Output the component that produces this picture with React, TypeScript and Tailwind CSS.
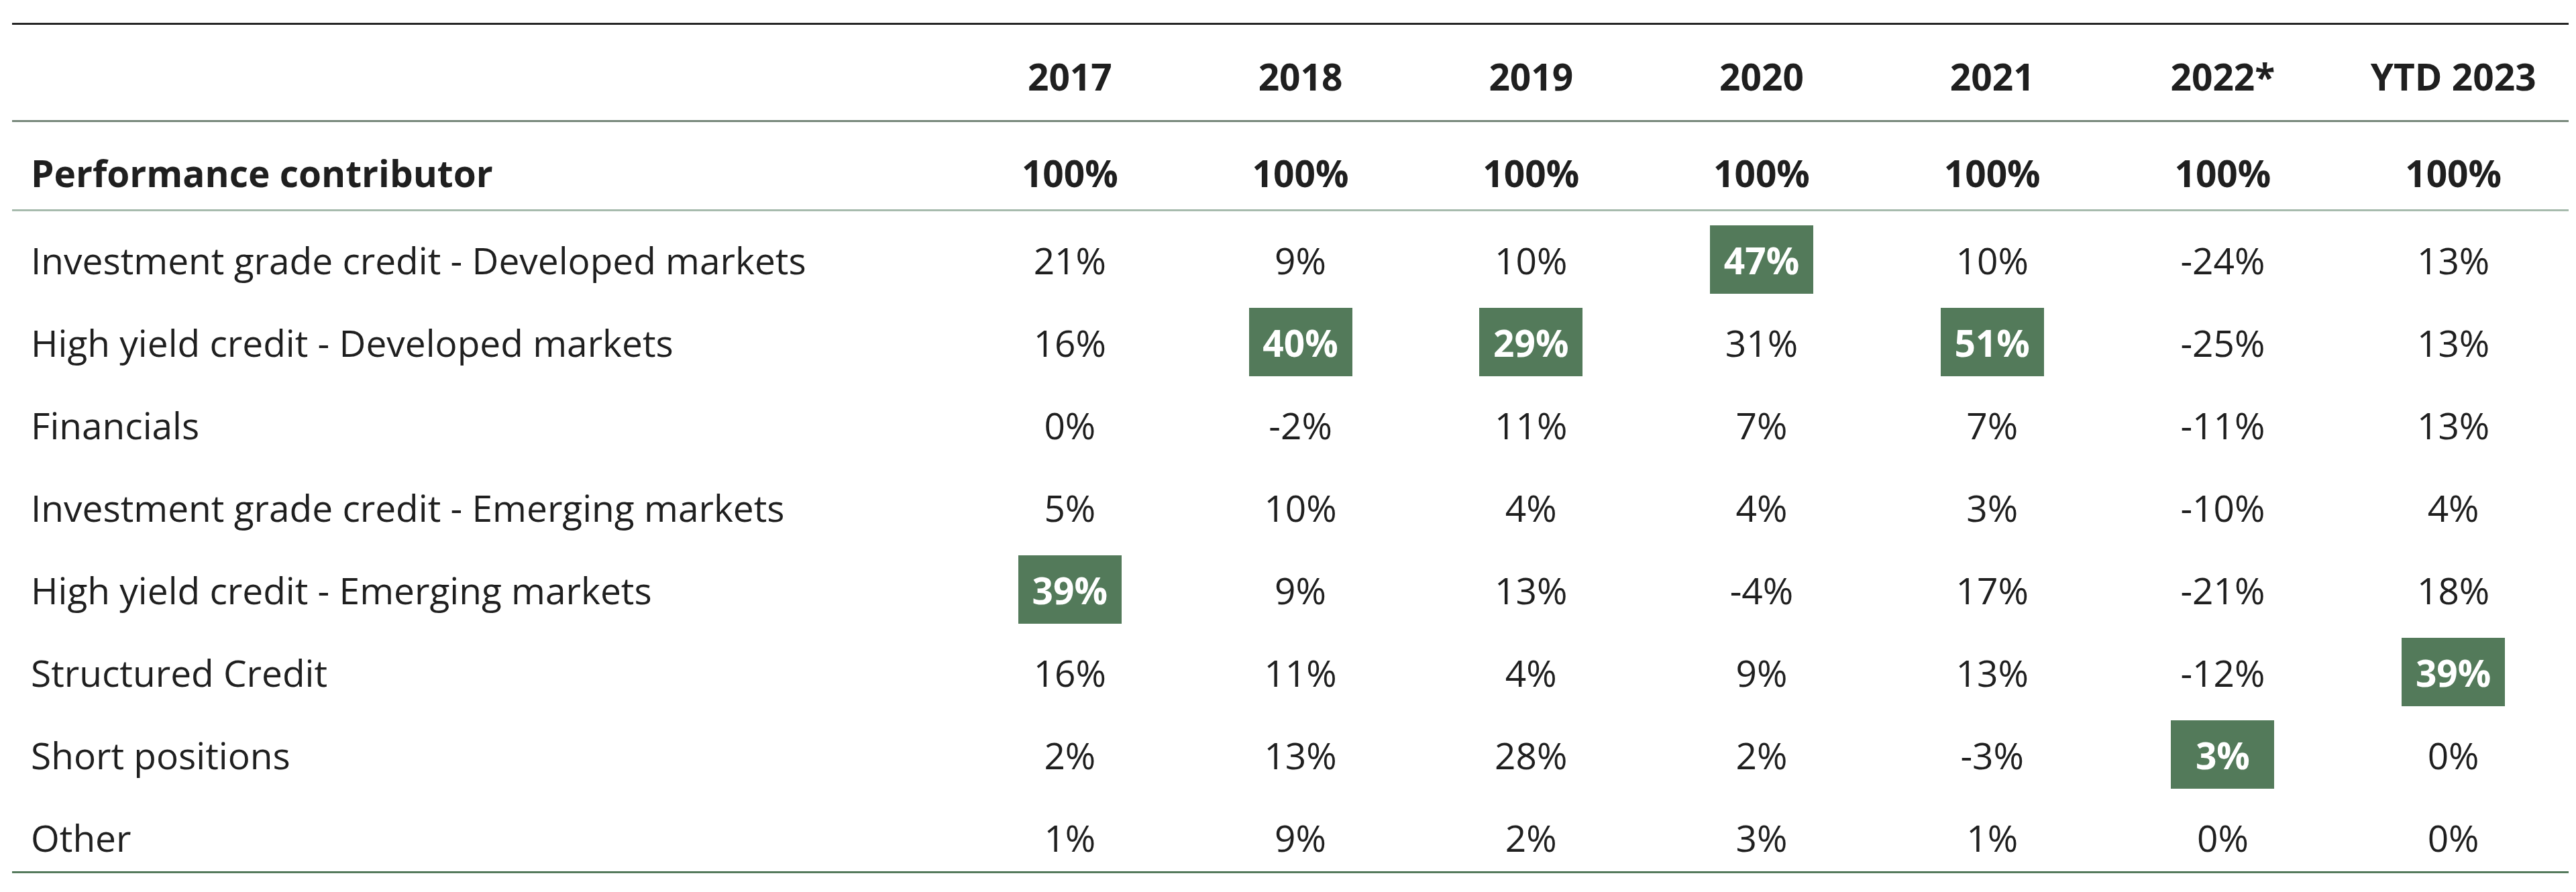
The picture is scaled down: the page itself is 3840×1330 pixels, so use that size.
import React from "react";

type Cell = { v: string; hi?: boolean };

const years = ["2017", "2018", "2019", "2020", "2021", "2022*", "YTD 2023"];

const rows: { label: string; cells: Cell[] }[] = [
  {
    label: "Investment grade credit - Developed markets",
    cells: [{ v: "21%" }, { v: "9%" }, { v: "10%" }, { v: "47%", hi: true }, { v: "10%" }, { v: "-24%" }, { v: "13%" }],
  },
  {
    label: "High yield credit - Developed markets",
    cells: [{ v: "16%" }, { v: "40%", hi: true }, { v: "29%", hi: true }, { v: "31%" }, { v: "51%", hi: true }, { v: "-25%" }, { v: "13%" }],
  },
  {
    label: "Financials",
    cells: [{ v: "0%" }, { v: "-2%" }, { v: "11%" }, { v: "7%" }, { v: "7%" }, { v: "-11%" }, { v: "13%" }],
  },
  {
    label: "Investment grade credit - Emerging markets",
    cells: [{ v: "5%" }, { v: "10%" }, { v: "4%" }, { v: "4%" }, { v: "3%" }, { v: "-10%" }, { v: "4%" }],
  },
  {
    label: "High yield credit - Emerging markets",
    cells: [{ v: "39%", hi: true }, { v: "9%" }, { v: "13%" }, { v: "-4%" }, { v: "17%" }, { v: "-21%" }, { v: "18%" }],
  },
  {
    label: "Structured Credit",
    cells: [{ v: "16%" }, { v: "11%" }, { v: "4%" }, { v: "9%" }, { v: "13%" }, { v: "-12%" }, { v: "39%", hi: true }],
  },
  {
    label: "Short positions",
    cells: [{ v: "2%" }, { v: "13%" }, { v: "28%" }, { v: "2%" }, { v: "-3%" }, { v: "3%", hi: true }, { v: "0%" }],
  },
  {
    label: "Other",
    cells: [{ v: "1%" }, { v: "9%" }, { v: "2%" }, { v: "3%" }, { v: "1%" }, { v: "0%" }, { v: "0%" }],
  },
];

export default function App() {
  return (
    <div
      className="min-h-[1330px] w-[3840px] bg-white pt-[34px] pl-[18px] text-[#1f1f1f] text-[55px] leading-none"
      style={{ fontFamily: '"Open Sans", "Noto Sans", sans-serif' }}
    >
      <div className="w-[3811px] border-t-[3px] border-[#262626]">
        {/* header */}
        <div className="grid grid-cols-[1405px_repeat(7,1fr)] h-[145px] pt-[10px] items-center border-b-[3px] border-[#77877b] font-bold">
          <div />
          {years.map((y) => (
            <div key={y} className="text-center">
              {y}
            </div>
          ))}
        </div>
        {/* performance contributor */}
        <div className="grid grid-cols-[1405px_repeat(7,1fr)] h-[133px] pt-[20px] items-center border-b-[3px] border-[#a7bbad] font-bold">
          <div className="pl-[28px]">Performance contributor</div>
          {years.map((y) => (
            <div key={y} className="text-center">
              100%
            </div>
          ))}
        </div>
        {/* data rows */}
        <div className="border-b-[3px] border-[#557a5c]">
          {rows.map((r) => (
            <div key={r.label} className="grid grid-cols-[1405px_repeat(7,1fr)] pt-[21px]">
              <div className="pl-[28px] h-[102px] flex items-center">{r.label}</div>
              {r.cells.map((c, i) => (
                <div key={i} className="flex justify-center">
                  {c.hi ? (
                    <div className="w-[154px] h-[102px] flex items-center justify-center bg-[#537a5a] text-white font-bold">
                      {c.v}
                    </div>
                  ) : (
                    <div className="h-[102px] flex items-center">{c.v}</div>
                  )}
                </div>
              ))}
            </div>
          ))}
        </div>
      </div>
    </div>
  );
}
